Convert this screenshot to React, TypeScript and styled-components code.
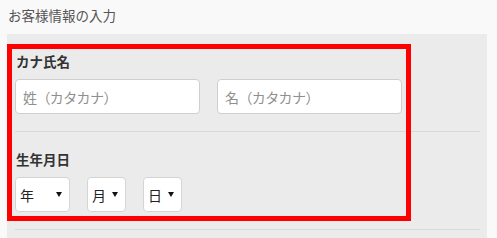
import React from "react";
import styled, { createGlobalStyle } from "styled-components";

const GlobalStyle = createGlobalStyle`
  html, body {
    margin: 0;
    padding: 0;
    background-color: #f9f9f9;
    font-family: "Noto Sans CJK JP", "Noto Sans", sans-serif;
  }
`;

const Page = styled.div`
  position: relative;
  width: 497px;
  height: 238px;
  overflow: hidden;
`;

const Title = styled.h1`
  margin: 0;
  padding: 0 0 0 8px;
  height: 34px;
  line-height: 30px;
  font-size: 13.5px;
  font-weight: 400;
  color: #555;
`;

const Panel = styled.div`
  margin-left: 7px;
  width: 480px;
  height: 204px;
  background-color: #ebebeb;
  padding: 0 7px 0 8px;
  box-sizing: border-box;
`;

const Section = styled.div`
  padding: 19px 0 17px;
  border-bottom: 1px solid #d9d9d9;
`;

const Label = styled.div`
  font-size: 13.5px;
  line-height: 16px;
  font-weight: 700;
  color: #333;
  margin: 0 0 10px 1px;
`;

const Row = styled.div`
  display: flex;
  gap: 17px;
`;

const TextInput = styled.input`
  width: 185px;
  height: 35px;
  box-sizing: border-box;
  border: 1px solid #cfcfcf;
  border-radius: 4px;
  background: #fff;
  padding: 0 7px;
  font-family: inherit;
  font-size: 14px;
  letter-spacing: -0.6px;
  color: #333;
  outline: none;
  &::placeholder {
    color: #8f8f8f;
  }
`;

const Select = styled.div<{ $width: number }>`
  width: ${(p) => p.$width}px;
  height: 35px;
  box-sizing: border-box;
  border: 1px solid #d4d4d4;
  border-radius: 4px;
  background: #fff;
  display: flex;
  align-items: center;
  justify-content: space-between;
  padding: 0 7px 0 4px;
  font-size: 14px;
  color: #222;
`;

const Arrow = styled.span`
  width: 0;
  height: 0;
  border-left: 3px solid transparent;
  border-right: 3px solid transparent;
  border-top: 5px solid #111;
`;

const Highlight = styled.div`
  position: absolute;
  left: 7px;
  top: 44px;
  width: 404px;
  height: 177px;
  box-sizing: border-box;
  border: 5px solid #ff0000;
  pointer-events: none;
`;

export default function App() {
  return (
    <Page>
      <GlobalStyle />
      <Title>お客様情報の入力</Title>
      <Panel>
        <Section>
          <Label>カナ氏名</Label>
          <Row>
            <TextInput placeholder="姓（カタカナ）" />
            <TextInput placeholder="名（カタカナ）" />
          </Row>
        </Section>
        <Section>
          <Label>生年月日</Label>
          <Row>
            <Select $width={55}>
              年<Arrow />
            </Select>
            <Select $width={39}>
              月<Arrow />
            </Select>
            <Select $width={39}>
              日<Arrow />
            </Select>
          </Row>
        </Section>
      </Panel>
      <Highlight />
    </Page>
  );
}
